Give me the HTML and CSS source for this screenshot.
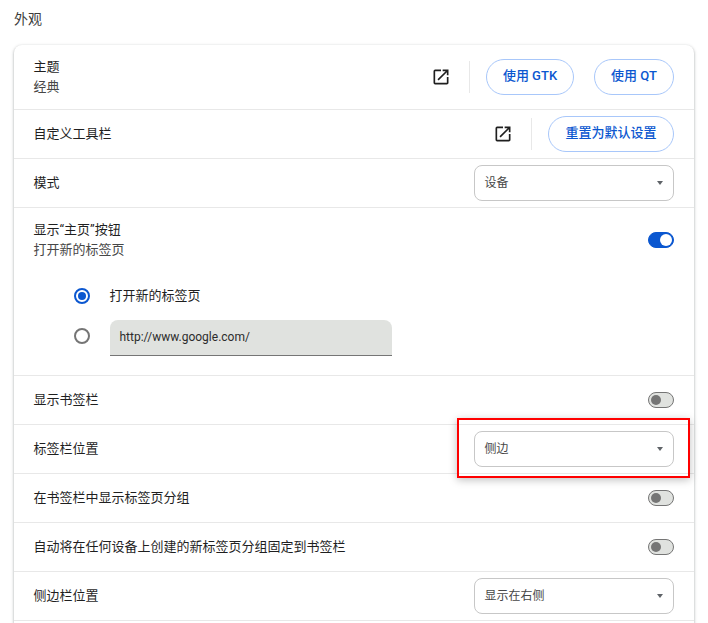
FILE: index.html
```html
<!DOCTYPE html>
<html lang="zh">
    <head>
        <meta charset="utf-8" />
        <title>外观</title>
        <link rel="stylesheet" href="styles.css">
    </head>
    <body>
        <div class="heading">外观</div>
        <div class="card">
            <div class="row row-theme">
                <div class="label">
                    <div>主题</div>
                    <div class="sub">经典</div>
                </div>
                <svg class="ext" viewBox="0 0 24 24"><path d="M19 19H5V5h7V3H5a2 2 0 0 0-2 2v14a2 2 0 0 0 2 2h14c1.1 0 2-.9 2-2v-7h-2v7zM14 3v2h3.59l-9.83 9.83 1.41 1.41L19 6.41V10h2V3h-7z" /></svg>
                <span class="sep"></span>
                <button class="btn btn-gtk">使用 GTK</button>
                <button class="btn btn-qt">使用 QT</button>
            </div>
            <div class="row">
                <div class="label">自定义工具栏</div>
                <svg class="ext" viewBox="0 0 24 24"><path d="M19 19H5V5h7V3H5a2 2 0 0 0-2 2v14a2 2 0 0 0 2 2h14c1.1 0 2-.9 2-2v-7h-2v7zM14 3v2h3.59l-9.83 9.83 1.41 1.41L19 6.41V10h2V3h-7z" /></svg>
                <span class="sep"></span>
                <button class="btn btn-reset">重置为默认设置</button>
            </div>
            <div class="row">
                <div class="label">模式</div>
                <div class="select">设备<span class="caret"></span></div>
            </div>
            <div class="row-group">
                <div class="row row-home">
                    <div class="label">
                        <div>显示“主页”按钮</div>
                        <div class="sub">打开新的标签页</div>
                    </div>
                    <span class="toggle on"></span>
                </div>
                <div class="radios">
                    <div class="radio-row">
                        <span class="radio checked"></span>
                        <span class="radio-label">打开新的标签页</span>
                    </div>
                    <div class="radio-row radio-row-input">
                        <span class="radio"></span>
                        <div class="url">http://www.google.com/</div>
                    </div>
                </div>
            </div>
            <div class="row">
                <div class="label">显示书签栏</div>
                <span class="toggle"></span>
            </div>
            <div class="row">
                <div class="label">标签栏位置</div>
                <div class="select">侧边<span class="caret"></span></div>
            </div>
            <div class="row">
                <div class="label">在书签栏中显示标签页分组</div>
                <span class="toggle"></span>
            </div>
            <div class="row">
                <div class="label">自动将在任何设备上创建的新标签页分组固定到书签栏</div>
                <span class="toggle"></span>
            </div>
            <div class="row">
                <div class="label">侧边栏位置</div>
                <div class="select">显示在右侧<span class="caret"></span></div>
            </div>
            <div class="row row-cut"></div>
        </div>
        <div class="highlight"></div>
    </body>
</html>
```

FILE: styles.css
```css
html, body {
    height: 623px;
    overflow: hidden;
}
body {
    background-color: #fff;
    color: #1f1f1f;
    font-family: Roboto, "Noto Sans CJK SC", sans-serif;
    font-size: 13px;
    line-height: 20px;
    margin: 0;
    position: relative;
}
.heading {
    box-sizing: border-box;
    color: #3c3c3c;
    font-size: 14px;
    height: 45px;
    padding: 9px 0 0 14px;
}
.card {
    background-color: #fff;
    border-radius: 8px 8px 0 0;
    box-shadow: 0 1px 2px rgba(60, 64, 67, 0.3), 0 1px 3px 1px rgba(60, 64, 67, 0.15);
    margin: 0 14px;
}
.row {
    align-items: center;
    border-top: 1px solid #e8e8e8;
    display: flex;
    height: 48px;
    padding: 0 20px 0 19.5px;
}
.card > .row:first-child {
    border-top: 0;
}
.row-theme {
    height: 64px;
}
.row-group {
    border-top: 1px solid #e8e8e8;
    height: 167px;
}
.row-group .row {
    border-top: 0;
}
.row-home {
    height: 64px;
}
.card > .row-cut {
    height: 2px;
}
.label {
    flex: 1;
}
.sub {
    color: #474747;
}
.ext {
    fill: #1f1f1f;
    height: 20px;
    width: 20px;
}
.sep {
    background-color: #e8e8e8;
    height: 32px;
    margin: 0 16px 0 18px;
    width: 1px;
}
.btn {
    background: #fff;
    border: 1px solid #a8c7fa;
    border-radius: 18px;
    color: #0b57d0;
    font-family: inherit;
    font-size: 13px;
    font-weight: 500;
    height: 36px;
    line-height: 20px;
    padding: 0 0 2px;
}
.btn-gtk {
    width: 88px;
}
.btn-qt {
    margin-left: 20px;
    width: 80px;
}
.btn-reset {
    width: 126px;
}
.select {
    align-items: center;
    border: 1px solid #c7c7c7;
    border-radius: 8px;
    box-sizing: border-box;
    color: #474747;
    display: flex;
    font-size: 12px;
    height: 36px;
    justify-content: space-between;
    padding: 0 10px 0 9.5px;
    width: 200px;
}
.caret {
    border-left: 3.5px solid transparent;
    border-right: 3.5px solid transparent;
    border-top: 4px solid #5f6368;
    height: 0;
    width: 0;
}
.toggle {
    background-color: #e0e2df;
    border: 1px solid #757575;
    border-radius: 8px;
    box-sizing: border-box;
    height: 16px;
    position: relative;
    width: 26px;
}
.toggle::after {
    background-color: #757575;
    border-radius: 50%;
    content: "";
    height: 10px;
    left: 2px;
    position: absolute;
    top: 2px;
    width: 10px;
}
.toggle.on {
    background-color: #0b57d0;
    border-color: #0b57d0;
}
.toggle.on::after {
    background-color: #fff;
    height: 12px;
    left: 11px;
    top: 1px;
    width: 12px;
}
.radios {
    padding: 0 0 0 60px;
}
.radio-row {
    align-items: center;
    display: flex;
    gap: 19.5px;
    height: 40px;
    margin-top: 4px;
}
.radio-row-input {
    align-items: flex-start;
    gap: 20px;
    height: 36px;
}
.radio {
    border: 2px solid #757575;
    border-radius: 50%;
    box-sizing: border-box;
    flex: none;
    height: 16px;
    position: relative;
    width: 16px;
}
.radio-row-input .radio {
    margin-top: 8px;
}
.radio.checked {
    border-color: #0b57d0;
}
.radio.checked::after {
    background-color: #0b57d0;
    border-radius: 50%;
    content: "";
    height: 8px;
    left: 2px;
    position: absolute;
    top: 2px;
    width: 8px;
}
.url {
    background-color: #e0e2df;
    border-bottom: 1px solid #757575;
    border-radius: 8px 8px 0 0;
    box-sizing: border-box;
    color: #2c2c2c;
    font-size: 12px;
    height: 36px;
    line-height: 35px;
    padding-left: 9.5px;
    width: 282px;
}
.highlight {
    border: 2px solid #f00;
    box-shadow: 0 2px 8px rgba(0, 0, 0, 0.25);
    box-sizing: border-box;
    height: 60px;
    left: 457px;
    position: absolute;
    top: 418px;
    width: 233px;
}
```
